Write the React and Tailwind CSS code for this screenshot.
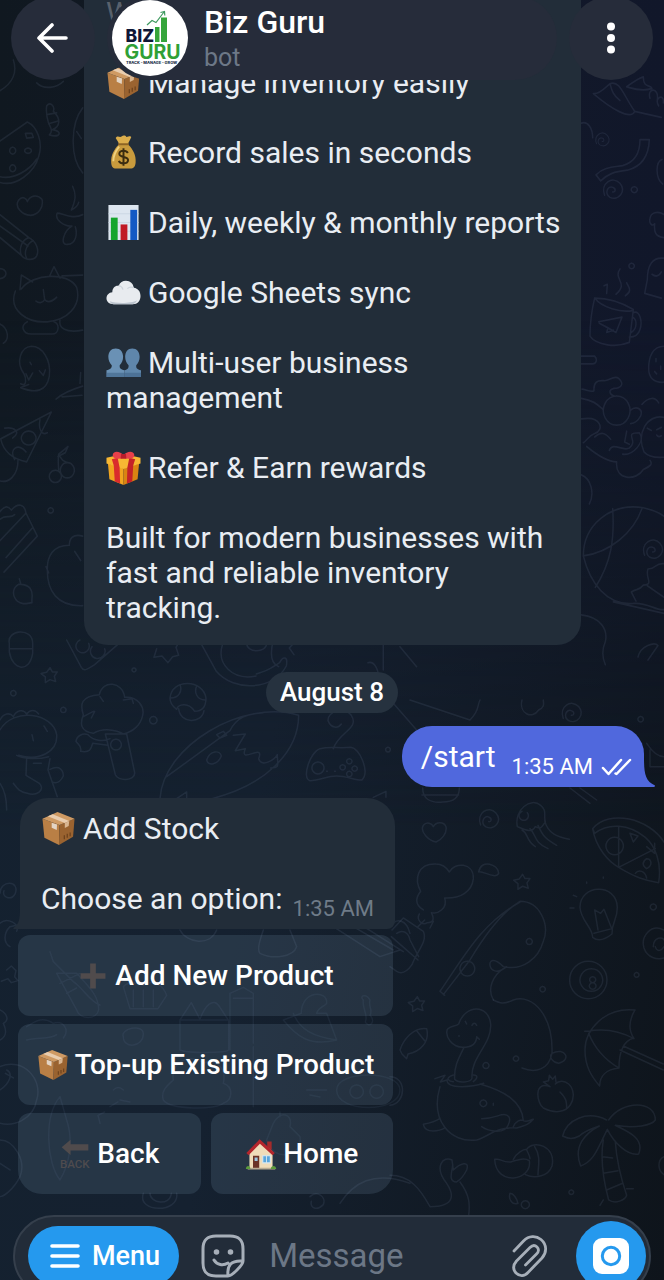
import React from "react";

function Glyph({ label, className = "h-[35px] w-[35px]", children }) {
  return (
    <svg role="img" aria-label={label} viewBox="0 0 36 36" className={`shrink-0 ${className}`}>
      {children}
    </svg>
  );
}

function Package({ className }) {
  return (
    <Glyph label="package" className={className}>
      <path d="M1.500 8 19 14.500 18.500 35 3.500 27.500Z" fill="#b97f45" />
      <path d="M19 14.500 34.500 8 33 26.500 18.500 35Z" fill="#9a6330" />
      <path d="M1.500 8 17 1 34.500 8 19 14.500Z" fill="#cf9a63" />
      <path d="M7 5.500 12 3.300 29 10.300 24.500 12.300Z" fill="#e9cdaf" />
      <path d="M24.500 12.300 29 10.300 28.500 15.500 24.500 17.500Z" fill="#d9b691" />
      <path d="M11 12 16.500 14 16.200 19.500 11 17.200Z" fill="#e3d4c4" />
      <path d="M24 25v4M27 23.500v4M30 22v4" stroke="#6d421d" strokeWidth="1.300" />
    </Glyph>
  );
}

function MoneyBag() {
  return (
    <Glyph label="money bag">
      <path d="M10 3c2-3 4 0 6-1.500 2-1.500 4-1 5 .5 2 0 4-1.500 5 0-1 3-3 5-3.500 8h-9C13 7 11 5 10 3Z" fill="#dcae4c" />
      <path d="M13 10h10c5 5 8 11 7.500 18-.3 4.500-2 6.500-5.500 6.500H10.500C7 34.500 5.500 32.500 5.300 28 5 21 8 15 13 10Z" fill="#c99b3d" />
      <path d="M13.500 12c-4 5-6 9-6 15" stroke="#efd07d" strokeWidth="2" fill="none" />
      <path d="M12.500 9.500h11" stroke="#8d6424" strokeWidth="2" />
      <path d="M22.500 18.500c-1-1.800-2.600-2.300-4.500-2.300-2.500 0-4.300 1.100-4.300 3.200 0 4.600 9 2 9 6.400 0 2.100-2 3.400-4.600 3.400-2.300 0-4.100-.8-4.900-2.700M18 13.700v18" stroke="#3b2c10" strokeWidth="2" fill="none" />
    </Glyph>
  );
}

function BarChart() {
  return (
    <Glyph label="bar chart">
      <path d="M2.500 0h31v36h-31Z" fill="#dde6f0" />
      <path d="M2.500 9h31M2.500 18h31M2.500 27h31" stroke="#c6d2e0" strokeWidth=".8" />
      <path d="M5 13h7v23H5Z" fill="#14a52c" />
      <path d="M15 20h7v16h-7Z" fill="#c01824" />
      <path d="M25 5h7v31h-7Z" fill="#1459c4" />
    </Glyph>
  );
}

function Cloud() {
  return (
    <Glyph label="cloud">
      <path d="M8 30C3 30 .5 27.500.5 24c0-3.500 2.500-6 6-6.300C6.500 13 9.500 10.500 13 11c1.500-3.500 4-5 7.500-5 4.500 0 7.500 3 8 7 4.500.5 7 4 7 8.500 0 5-3 8.500-8 8.500Z" fill="#e8ebef" />
      <path d="M4 27c6 2.500 22 2.500 28-1-1.500 2.700-3 4-5 4H8c-2 0-3.500-1-4-3Z" fill="#bcc4ce" />
      <path d="M13 11c2.500.4 4 2 4.500 4M22 14c1.500-1.500 4-2 6.500-1" stroke="#cdd4dc" strokeWidth="1.200" fill="none" />
    </Glyph>
  );
}

function People() {
  return (
    <Glyph label="two people">
      <path d="M27 3.500c4.700 0 7.600 3.500 7.600 8.700 0 3.700-1.400 6.700-3.500 8.500-.3 3 .9 4.200 4.900 5.300v7H19v-7c3.500-1 4.500-2.500 4.200-5.300-2.100-1.800-3.500-4.800-3.500-8.500 0-5.200 2.700-8.700 7.300-8.700Z" fill="#5f86ab" />
      <path d="M10 3.500c4.700 0 7.600 3.500 7.600 8.700 0 3.700-1.400 6.700-3.500 8.500-.3 3 .9 4.200 4.900 5.300v7H.5v-7c4-1.100 5.700-2.500 5.400-5.300-2.100-1.800-3.500-4.800-3.500-8.500C2.400 7 5.400 3.500 10 3.500Z" fill="#6a91b5" />
      <path d="M.5 28.500H36V33H.5Z" fill="#3f6488" opacity=".6" />
    </Glyph>
  );
}

function Gift() {
  return (
    <Glyph label="gift">
      <path d="M2 14 18 19v17L3.500 30Z" fill="#f1a51f" />
      <path d="M34 14 18 19v17l14.500-6Z" fill="#d98412" />
      <path d="M.5 8 18 4l17.500 4v6L18 19.500.5 14Z" fill="#f7b733" />
      <path d="M6 9.500 12 8l2 10 .5 16.500L9 32.300 8 16Z" fill="#da2c2c" />
      <path d="M30 9.500 24 8l-2 10-.5 16.500 5.500-2.200L28 16Z" fill="#c42227" />
      <path d="M18 8C13 10 6 9 7 4.500 8 0 15 1.500 18 5c3-3.500 10-5 11-.5C30 9 23 10 18 8Z" fill="#e8404a" />
      <path d="m15.500 4 5 0 .5 5h-6Z" fill="#b91d2b" />
    </Glyph>
  );
}

function House() {
  return (
    <Glyph label="house" className="h-8 w-8">
      <path d="M25 4h5v9h-5Z" fill="#a52b2b" />
      <path d="M5 15 17 4l14 11v19H5Z" fill="#f0dcb9" />
      <path d="M1.500 17 16.500 1.500 33.500 17l-2.500 2.500L16.800 6.500 4 19.500Z" fill="#b3262c" />
      <path d="M9 20h7v14H9Z" fill="#6b3327" />
      <path d="M10.800 22h3.400v4h-3.400Z" fill="#9fc6e0" />
      <path d="M20 20h8.500v8H20Z" fill="#5aa6dc" stroke="#d8e8f2" strokeWidth="1.200" />
      <path d="M24.200 20v8" stroke="#d8e8f2" />
      <path d="M3 34.500h31" stroke="#b9ab93" strokeWidth="2" />
      <path d="M1 35c0-4 4-5 5-1v1ZM29 35c0-4 5-5 6-1v1Z" fill="#5c9b3c" />
    </Glyph>
  );
}

function Plus() {
  return (
    <Glyph label="plus" className="h-8 w-8">
      <path d="M14.800 4h6.400v10.800H32v6.400H21.200V32h-6.400V21.200H4v-6.400h10.800Z" fill="#504b4c" />
    </Glyph>
  );
}

function BackArrow() {
  return (
    <Glyph label="back" className="h-8 w-8">
      <path d="M3 10.500 13 2v5h20v7H13v5Z" fill="#504b4c" />
      <text x="1" y="34" fontSize="13" fontWeight="500" fontFamily="Roboto, sans-serif" fill="#4e4b4e">BACK</text>
    </Glyph>
  );
}

const star = "m0-22 7 13 15 0-9 13 4 16-17-6-14 9 0-17-13-10 17-4Z";
const swirl = "M-26 16c-14-36 24-60 46-36 20 24-4 54-30 42-18-12-6-36 8-30 12 4 8 16 0 14";

function Wallpaper() {
  return (
    <svg aria-hidden="true" viewBox="0 0 664 1280" preserveAspectRatio="xMidYMid slice" className="absolute inset-0 h-full w-full">
      <g fill="none" stroke="#8ea3c8" strokeOpacity=".11" strokeWidth="4.500" strokeLinecap="round" strokeLinejoin="round">
        <g transform="translate(0 60) scale(.3333 .3827)">
          <path d="M40 0c12 30 0 60-40 80M110 60c20 18 60 14 80-4M140 120c10-12 26 0 20 14 24 20 20 40-2 48 30 4 24 22-10 14 12-10 4-20-2-30-8-22-8-34-6-46ZM144 142l26-4M148 166l24-6" />
          <path d="M0 212 82 162c30 12 48 54 34 90-12 40-66 80-116 68M76 192l20 0 4 10-20 2ZM38 228a9 9 0 1 0 .1 0M84 230a10 7 0 1 0 .1 0M38 274a9 9 0 1 0 .1 0M0 305c40 8 88-16 110-46M248 125c-36 40-40 130 0 170M244 205l-14-18" />
          <path d="M92 406c-26-2-50-22-36-40 12-12 24-4 26 4 8-16 30-20 44-6 6 22-12 40-34 42ZM0 404l86 60c24 10 32 34 24 48-10 14-36 10-46-2L0 464M0 434l84 52M86 464c-20 6-30 28-22 46M100 472c-18 6-30 30-20 46M218 330c12 22 8 38-4 62 14-6 20-12 22-20M248 404c-30 14-60-4-76-4-10 16 20 36 44 34-24 12-38 50-14 48 28-2 30-30 24-46" />
          <path d="M60 600l4-38 34 18M148 566l14-26 18 30M64 598c34-40 140-46 166-4 16 50-30 86-88 90-60 4-118-30-96-80M130 600l4 26c-6 10-18 10-26 4M134 626c10 10 24 4 36-6M82 684c-24 10-12 32 12 32h62c22 0 24-26 6-32M180 680c-4 20 16 34 68 26M186 564l62-2M0 690c24 10 30 40 10 50M0 545a18 13 0 0 1 0 26" />
          <path d="M62 846c20 10 16-16 10-26-26-30-10-70 22-72 34 0 60 36 54 78-8 40-40 46-86 30l24-8M78 820l8 16 12-18M118 812l12 12 6-14M90 790l4 6M168 886c20-16 50-26 80-34M186 880l60-4M240 845l2-28" />
          <path d="M2 990 154 920 80 1050c-46-8-70-28-78-60ZM86 970a22 18 0 1 0 .1 0M120 940c-6 26 6 42 22 34M44 1044c-20-30 14-44 34-20M14 962c30-4 50 10 24 26M54 1046c0 40-28 60-54 54M166 1072a18 16 0 1 0 .1 0M202 1052a21 20 0 1 0 .1 0M176 1070c-2-20-2-26 0-40l28-20-8 16-22 10M178 1034l10 12 12 6M152 1170a8 7 0 1 0 .1 0" />
          <path d="M0 1180c14-16 24-16 34-4 20-20 40-16 44 8l34 60L12 1338M0 1256l78-72M18 1300l78-76M0 1200c20-14 30 0 44-12M56 1370c-20 10-20 30-4 44 14 10 26 6 44 4-2-16 6-24-6-38-12-12-26-10-34-10ZM62 1368l-4-12M248 1244c-30-6-40 6-40 24-50 0-66 30-66 60-2 60 30 100 106 98M224 1284l18 24M146 1340l-8-16" />
        </g>
        <g transform="translate(560 60) scale(.3333 .3827)">
          <path d="M100 88c20 2 40-20 50-26 30-10 40 30 74 72-12 24-70-6-124-46ZM150 62c6 20 10 30 30 44M200 70c14-10 40-24 50-26 0 30 20 20 26 30-30 10-60 0-76-4M224 134l80 16M270 100c-10-28 28-30 22 4M296 120c-16-22 18-34 14-8" />
          <path d="M64 165c20-6 34 14 34 38M240 208h28c-2 50-30 72-66 80-40 4-60 10-80 28l-14-16c22-20 50-20 80-24 34-8 52-32 52-68ZM306 260c-20 6-20 50 2 64M312 404c-20-12-40-4-42 10-4 14 8 22 14 14-2 18 0 34 28 36M312 518c-36-4-50 20-50 56l-8 36 50 12M276 560c12 8 20 6 28-6" />
          <path d="M104 622c-10 36-14 70-14 100 20 24 80 30 118 16l12-86c-26-14-70-30-116-30ZM104 622c20 24 80 40 116 32M220 660c20-6 28 24 20 44-6 18-22 20-32 20M218 672c14 6 14 30-4 40M116 684l70-12-18 40-24-12-26-12M144 700l-4 12 20-6M140 610l2-24-10 4M168 612c40-30-10-40 12-66M196 616c24-14 8-24 4-34" />
          <path d="M64 774h40c10 8 4 20-6 20H64M312 748c-34 0-46 28-46 58 0 24 16 38 46 36M288 780v8M302 800v8M284 814l6 6M66 860c10 0 30 10 36 4-2-22 10-28 30-26 14 2 30-16 44-6 20 16 4 26-14 26-18 4-14 16 0 20M170 878a40 38 0 1 0 .1 0M210 916c20-14 40-4 32 14-10 16-20 20-30 20M64 884c40 6 50 18 66 30M64 938c60-10 70 30 40 38-20 6-24 20-34 24M80 1010c50 36 80 40 90 40-6 50 60 50 80 20 24-10 28-14 20-24M104 985c20-14 30-12 48 6M148 1020c10-24 40 4 60-6 30-20-20-40 30-40 20 24-20 60-50 56M200 970l-6 28 14 6M312 934c-50-10-84 42-60 90 12 12 30 16 60 14M262 962l12 6M290 966l14-6M290 980c4 6 10 4 14 2M246 900c20-20 40-20 50-4" />
          <path d="M70 1296c0-80 80-140 180-126 30 6 46 12 62 22M70 1296c20 70 70 130 150 124 40-4 70 20 92 16M158 1172c6 80-4 140-52 206M70 1296c80-10 150-60 176-124M160 1416l152 30M312 1316c-30-2-20 14-48 14-10 24 20 40-14 42-14 16-20 8-36 18l14 24M262 1374l50 30M64 1450c60 6 80 40 72 70-10 20-10 40 0 60M64 1084c30 10 40 50 24 76M234 1560c8-30 50-40 60-30l-30 38" />
        </g>
        <g transform="translate(0 640) scale(.3333)">
          <path d="M28 10c-10-40 70-50 70 0v30c-10 60-60 52-70-4ZM28 26h70M200 0l44 82c8 14 18 6 40-8l80-70M240 0a20 20 0 1 0 26 10M276 20a22 22 0 1 0 38 6M470 26l-8 26 24-4 18 20 14-18 18-4-8-24 12-20M605 14l44 80c50 60 170 60 210-16 6-30-10-30-20-10-30 20-40 24-70 34M668 12c-20 60 30 110 100 96M740 10c0 30 60 30 60 0M820 0c-10 40-10 70 16 80M890 0l-22 24 14 20M1150 0v90M1104 68c20-6 30 20 34 48M1200 20l50 60" />
          <path d="M280 280c-40-6-40-30-30-56-10-30-8-56 48-60 10-46 70-40 76 8 40-4 60 30 54 54-6 30-30 50-58 56-20-12-60-20-90-2ZM300 170l10 14M250 230l30-16M274 234l10-20M370 180l26-4 4 14M316 282l30 122c6 20 60 20 58-6l-24-116ZM348 298a16 16 0 1 0 .1 0M330 296c-20 10-50 6-66-12-16-6-34 4-36 20 6 10 18 12 14 30 30 6 32-10 36-24l46 6" />
          <path d="M510 174c6-60 100-56 108 0 0 30-14 40-34 40-20-30-50-20-54-6-14-10-20-20-20-34ZM512 174c24 0 36-20 28-40M616 180c-26 0-34-24-26-42M536 206c4 46 70 46 76 6M480 476c10-160 250-300 416-250 0 110-100 210-260 250M500 410 690 272c20-40 50-50 100-54M620 360c10-30 40-30 44-12-10 26-40 32-44 12ZM700 286l36-4-30 50 30-6c-20 50 60-20 40 30 10 30 50 0 56-12 0 30 10 40-20 40M650 284l20-10 10 12-20 8ZM530 476l30-20v18" />
          <path d="M1000 326c16-50 80-60 54-100-20-26-70-14-70 16 10 24 30 24 40 10M960 326c-30 10-56 90-30 96 30 0 50-14 80-14s60 14 76 12c24-24-6-96-34-98-40 4-60-4-92 4ZM954 366a18 18 0 1 0 .1 0M1048 356a8 8 0 1 0 .1 0M1064 378a8 8 0 1 0 .1 0M1028 374a8 8 0 1 0 .1 0M1048 394a8 8 0 1 0 .1 0M980 394h2M1004 394h2M1180 190l70 80M1120 472l38-18v18M0 270c40-70 160-50 170 14 4 50-50 80-114 62M50 346c20 10 60 14 96 4M0 240c10-20 30-24 40-10 10-20 30-24 40-8 10-14 26-14 36 0M96 284l4 18M132 258l10 16M80 352l-2 54 40 24c20 20-10 40-36 30-24-4-30-14-42-30M150 356l-6 34 28 80M150 388c30-14 40 4 40 20-8 16-20 24-34 18M100 370h24M0 430c14 20 20 50 20 80" />
        </g>
        <g transform="translate(0 780) scale(.3333)">
          <path d="M30 500c-20-12-20-40 0-60l26-6M0 430c20-20 60 0 50 24M20 570l14-12 14 14-4 18 10 12-20 6-10-12-20 8M0 690c20 10 30 30 10 40 10 20 10 40-10 50M0 860c70-30 130 40 110 100-10 60-70 80-110 70M0 1080c40 0 80 60 60 110-20 40-50 60-60 60M16 880l24 14M0 930c30-20 40-50 20-60M0 1150l30 20M0 340c0-40 60-40 46 0-12 24-42 12-34-8" />
          <path strokeOpacity=".08" d="M150 515l10 30 60 60c30 20 50 60 80 70M170 580l60 110c10 30 60 30 66 0 0-40-20-60-66-110ZM180 610l60-30M200 640l30-16M370 620c20-20 40-10 60-4 30-20 60 0 70 30l-26 40H390ZM400 630v50M430 630v50M460 630v50M540 720l34-52 26 50c14-40 40-70 60-36l26 40M540 720v90c20 10 140 10 146 0v-90ZM690 640v170M690 640l40-18 30 18v150M700 655h60M850 720l54-20c0-70 80-70 76-30-6 10-24 10-30 30l30 0 30 80c-80 20-120-10-160-60ZM880 700c20 50 60 70 130 80M1090 660c-14-14 10-20 20 0-6 20 10 30 0 46 20 20-4 40-14 20 10-20-10-40-6-66ZM370 770c-10-24 60-40 60-8 0 40-60 46-60 8ZM80 740c30-20 50-30 80-10 30-10 50 20 30 44M80 780c30-10 70 0 90-16" />
          <path strokeOpacity=".08" d="M490 960c-10-30 20-50 30-60-10-60 60-80 90-50 40-20 70 20 60 60 30 10 30 50 0 60-20 20-160 20-180-10ZM760 800v180M1010 930c0-60 190-60 190 0 0 70-190 70-190 0ZM1070 915a20 20 0 1 0 .1 0M1130 915a20 20 0 1 0 .1 0M920 930h60M930 945l30 6M300 1030l-6-24 20-10M330 980l24-14M340 930c10-10 20-10 30 0M360 960l30 6M180 950c-50 60-40 200 0 250M180 950l20 70c20 60 10 130-20 180M820 1030c20-40 60-30 50 10l30 30c10 60-80 80-100 10ZM840 1010v-14" />
          <path d="M430 1240c-20 60 110 60 100 0M450 1240c0 30 60 40 64 0M930 1250c20-20 50 0 40 24-20 20-40 10-36-10M1020 1270c40-60 100-100 210-60M540 450c20 40 90 50 110 0M790 450c-10 30-20 60-10 70 40 20 100 10 110-20l-20-50M1000 440l140 90 60-20M1060 440l120 70M1170 440c20-30 50-20 60 20M1100 445l110 70" />
        </g>
        <g transform="translate(390 700) scale(.3333)">
          <path d="M60 0 240 60c30-30 20-40 30-60M396 0c-10 40 30 60 50 30 20-10 14-20 14-30M98 264c0 30 20 46 60 42 40 0 50-20 50-42M96 285h110M540 264l60 46M570 264l50 36M138 426c-20-4-50-30-38-50 10-12 26-6 30 4 8-16 32-16 38 0 4 20-14 40-30 46ZM382 380c-10-50 40-90 70-64 20 16 8 30 14 50-10 12-10 24-30 14-10 20-30 10-54 0ZM396 334a14 14 0 1 0 16 4M396 390c20 10 10 30 40 50M420 386c20 20 10 40 54 60M444 376c14 30 20 40 56 60M464 362c10 40 40 50 74 56" />
          <path d="M608 386c50-60 170-30 214 40M608 386c10 60 50 100 78 116 50 30 80 40 120 46 10-60-10-110-40-136-50-40-110-44-152-12ZM686 382v120l110-56M674 412a26 26 0 1 0 .1 0M720 400l24 8-14 18ZM770 476c14 0 20 20 0 30-14-10-14-20 0-30ZM736 520c10-14 30-6 34 14M770 440l24 20 0-30M770 130c20 30 40 40 52 40M780 150v50h42" />
          <path d="M100 630c-30-20-20-40-8-56-20-36-10-84 46-82 20 0 30 8 40 24 14-30 74-30 72 20-4 40-40 60-86 58 10 30-20 50-40 44 10 20 6 30-12 30-16 10-34-8-24-26M266 516c6-40 60-24 60 4-10 20-50-10-60-4ZM6 690l34-36 60 40c14 30-20 60-34 100-14 20-30 30-46 20L0 800M20 700c20-14 36 0 40 20L86 770M84 680l20-20M120 684l10-20M4 710l80 70" />
          <path d="M160 884 240 780c30-50 90-140 150-176 60 0 90 70 70 120-14 50-60 90-120 76-60-60-50 50 10 0M150 874c70-100 120-200 240-268M150 874l14 12M232 784a22 22 0 1 0 .1 0M340 806c-30 20-50 60-30 94M608 712c0-30-36-50-38-90 0-70 110-74 112 0 0 40-16 40-16 80-20 16-40 24-58 10ZM624 690l-10-60 18 10 10-12 24 60M612 700l54-14M595 840m-56 0a56 56 0 1 1 112 0a56 56 0 1 1-112 0M604 806a34 34 0 1 0 .1 0M608 830a9 9 0 1 0 .1 0M608 848a10 10 0 1 0 .1 0M550 586l10 4M540 624h12M590 550v-4M640 535v-4M822 690c-40-20-70 20-60 54 10 30 40 36 60 30M790 740c0-30 30-30 32-20M796 740c6 20 20 10 26 0" />
        </g>
        <g transform="translate(390 960) scale(.3333)">
          <path d="M310 120c20 10 30 14 60 0 60-20 120 50 116 160 40-20 60 20 20 30-20-4-30-20-20-30-10 50-50 60-90 44M378 288a8 8 0 1 0 .1 0M30 270c10-30 40-70 80-64 10 40-20 70-56 76l-4 14-14-14ZM80 212l24 30" />
          <path d="M218 262c-30 0-54-30-46-54 10-12 24-8 34-16 20-60 90-60 96 0 4 60-60 100-56 160M218 262c20 0 40-6 42-30M260 230l8 8M222 262c-20 40-30 60-28 96 10 12 50 10 52-4M226 184l4 8M246 196c4-8 10-8 14 0M206 228h2M135 356l30-10-14 20 20-6c0 30 80 20 110 10M190 345c-30 10-10 20 0 20M250 345c14 0 14 10 0 20M150 380c-30 100 30 170 110 160 40-10 50-40 120-36 30-8 40-14 50-26-10 2-20 10-30 4-4-60-60-90-130-110M150 475c-14 10-30 14-50 18 6 30 50 20 66 10M275 476c30 0 40-6 60-12 20-4 30 10 20 30-10 30-60 20-80 6M370 500c10-20 20-20 30-20M280 420a10 10 0 1 0 .1 0M310 430v6" />
          <path d="M735 150c-90-10-150 60-150 120 0 50 20 80 44 108 0-30 20-50 58-54 0-40 10-80 44-90-20-30-10-60 4-84ZM592 214c50-10 100 0 140 22M596 220c20 50 50 80 90 104M584 214h14M690 270l130 60M700 258l120 54M480 380l-20-14 16-4 2-16 10 12 8-10 2 18M480 380c-50-20-40 50-20 64 80 40 110-40 76-72-14-12-30-10-40 0M510 396c20 20 20 30 20 50" />
          <path d="M650 480c-60-30-120 0-132 48 20 10 30 10 50 0 10-10 30-20 60-30-40 20-80 60-56 120 40-14 50-50 80-110 20 40 60 80 94 74 20-50-40-70-70-86 60 10 110 0 120-16 0-60-100-60-140 0M640 540c-10 60 0 120 16 180 20 14 50 0 54-14-20-60-30-100-34-160M638 590l30 4M640 640l44-8M650 690l48-20M710 686h20M640 720l-10 16M318 598c10-4 20 10 44 8 20-6 40-14 56-4 10 60-100 80-104-4ZM370 598c10-20 30-30 40-30 20-30 90-10 76 50-10 30-50 40-80 26M410 570c10 20 10 20 10 26M434 560c20 30 10 60 10 84M0 646c60 0 90 40 120 94 80 0 70-40 50-70-40-50-10-84 16-70l4 30c20-20 50-30 40 0-10 20-20 30-30 36-30 0-10-40-12-54M210 666c30 40 30 70 26 100M360 700c10 0 20 14 24 30-16 6-30-10-24-30ZM406 722a12 12 0 1 0 .1 0M822 590c-20 10-20 40 0 54M0 350c50 0 50 80 0 86" />
        </g>
        <g transform="translate(0 0) scale(.3333)">
          <path transform="translate(1840 570)" d={swirl} />
          <path transform="translate(1808 420) scale(.7)" d={swirl} />
          <path transform="translate(1960 1650)" d={swirl} />
          <path transform="translate(1716 2140)" d={swirl} />
          <path transform="translate(1468 2459)" d={swirl} />
          <path transform="translate(150 2025)" d={star} />
          <path transform="translate(1568 2645)" d={star} />
          <path transform="translate(1252 3012)" d={star} />
          <path d="M40 2072a8 8 0 1 0 .1 0M190 2122a8 8 0 1 0 .1 0M460 2150a11 11 0 1 0 .1 0M402 2004a6 6 0 1 0 .1 0M1164 2242a7 7 0 1 0 .1 0M1922 2150a8 8 0 1 0 .1 0M1960 2712a9 9 0 1 0 .1 0M1588 2816a9 9 0 1 0 .1 0M1628 2960a8 8 0 1 0 .1 0M1910 2918a7 7 0 1 0 .1 0M1714 3570a7 7 0 1 0 .1 0M1458 3188a9 9 0 1 0 .1 0M1903 560a9 9 0 1 0 .1 0M1895 790a8 8 0 1 0 .1 0" />
        </g>
      </g>
    </svg>
  );
}

function Logo() {
  return (
    <svg role="img" aria-label="Biz Guru logo" viewBox="0 0 76 76" className="h-[76px] w-[76px] shrink-0 rounded-full bg-white">
      <path d="M43 27h4.500v15H43ZM49 17.500h6V42h-6Z" fill="#35a53b" />
      <path d="m35 25 5-4.500 4 2 8-10.500m-3.500.500 4-1 .300 4" fill="none" stroke="#3f9a60" strokeWidth="1.200" />
      <text x="13.500" y="42" fontSize="17.500" fontWeight="800" fontFamily="Inter, sans-serif" fill="#0f1736">BIZ</text>
      <text x="12.500" y="58.500" fontSize="19.500" fontWeight="700" fontFamily="Inter, sans-serif" fill="#2fa036">GURU</text>
      <text x="14" y="63.500" fontSize="3.900" fontWeight="800" fontFamily="Inter, sans-serif" fill="#22314a">TRACK - MANAGE - GROW</text>
    </svg>
  );
}

function Header() {
  return (
    <header className="absolute inset-x-0 top-0 z-10 -mt-1 flex items-start gap-3 px-[11px]">
      <button type="button" aria-label="Go back" className="flex h-[84px] w-[84px] shrink-0 items-center justify-center rounded-full bg-[#262c3a]">
        <svg viewBox="0 0 32 32" className="h-8 w-8" fill="none" stroke="white" strokeWidth="3.600" strokeLinecap="round" strokeLinejoin="round">
          <path d="M29 16H2M15 3 2 16l13 13" />
        </svg>
      </button>
      <div className="flex h-[84px] min-w-0 flex-1 items-center gap-4 rounded-full bg-[#262c3a] pl-[5px]">
        <Logo />
        <div className="min-w-0 pt-1">
          <h1 className="text-[32px] leading-9 font-medium text-white">Biz Guru</h1>
          <p className="text-[25px] leading-9 text-[#6d7887]">bot</p>
        </div>
      </div>
      <button type="button" aria-label="More options" className="flex h-[84px] w-[84px] shrink-0 items-center justify-center rounded-full bg-[#262c3a]">
        <svg viewBox="0 0 8 32" className="h-8 w-2" fill="white">
          <circle cx="4" cy="4.500" r="4" />
          <circle cx="4" cy="16" r="4" />
          <circle cx="4" cy="27.500" r="4" />
        </svg>
      </button>
    </header>
  );
}

const features = [
  { icon: Package, text: "Manage inventory easily" },
  { icon: MoneyBag, text: "Record sales in seconds" },
  { icon: BarChart, text: "Daily, weekly & monthly reports" },
  { icon: Cloud, text: "Google Sheets sync" },
  { icon: People, text: "Multi-user business management" },
  { icon: Gift, text: "Refer & Earn rewards" },
];

function IntroMessage() {
  return (
    <article className="ml-[84px] flex w-[497px] shrink-0 flex-col gap-[35px] rounded-3xl bg-[#222d39] pt-5 pr-4 pb-5 pl-[22px] text-[30px] leading-[35px] text-[#e9edf3]">
      <p className="text-[#59616c]">W</p>
      {features.map(({ icon: Icon, text }) => (
        <p key={text}>
          <span className="mr-[7px] inline-block h-[35px] w-[35px] align-top">
            <Icon />
          </span>
          {text}
        </p>
      ))}
      <p>Built for modern businesses with fast and reliable inventory tracking.</p>
    </article>
  );
}

function SentMessage() {
  return (
    <article className="relative mt-[13px] mr-5 flex h-[61px] shrink-0 items-center gap-4 self-end rounded-l-[30px] rounded-tr-[28px] bg-[#5068dd] pr-3 pl-[19px] text-white">
      <a href="#start" className="text-[30px] leading-[35px]">/start</a>
      <div className="flex items-center gap-2 pt-5">
        <time className="text-[22px] leading-7">1:35 AM</time>
        <svg role="img" aria-label="Read" viewBox="0 0 31 18" className="h-[18px] w-[31px]" fill="none" stroke="white" strokeWidth="2.500" strokeLinecap="round" strokeLinejoin="round">
          <path d="m2 10 5.500 6L20 2M14.500 15.500l1 .5L29 2" />
        </svg>
      </div>
      <svg aria-hidden="true" viewBox="0 0 12 30" className="absolute right-[-11px] bottom-0 h-[30px] w-3">
        <path d="M0 0h1c0 16 1 24 11 28.500 0 1-.5 1.500-2 1.500H0Z" fill="#5068dd" />
      </svg>
    </article>
  );
}

function KeyboardButton({ icon: Icon, children }) {
  return (
    <button type="button" className="flex h-[81px] flex-1 items-center justify-center gap-[6px] rounded-xl bg-[#8fb0cc]/15 text-[28px] leading-8 font-medium whitespace-nowrap text-white">
      <Icon className="h-8 w-8" />
      {children}
    </button>
  );
}

function OptionMessage() {
  return (
    <article className="mt-[11px] flex w-[375px] shrink-0 flex-col">
      <div className="relative ml-5 w-[375px] rounded-t-[28px] rounded-br-lg bg-[#222d39] px-[21px] py-[13px] text-[30px] leading-[35px] text-[#e9edf3]">
        <p className="flex items-center gap-[7px]">
          <Package className="h-[35px] w-[35px]" />
          Add Stock
        </p>
        <div className="mt-[35px] flex items-end justify-between">
          <p>Choose an option:</p>
          <time className="-mb-1 text-[22px] leading-[22px] text-[#6f7b88]">1:35 AM</time>
        </div>
        <svg aria-hidden="true" viewBox="0 0 8 20" className="absolute bottom-0 left-[-7px] h-5 w-2">
          <path d="M8 0v20H1c-1 0-1-1 0-1.500C6 15 7 10 7 0Z" fill="#222d39" />
        </svg>
      </div>
      <div className="mt-[6px] ml-[18px] flex w-[375px] flex-col gap-2">
        <div className="flex"><KeyboardButton icon={Plus}>Add New Product</KeyboardButton></div>
        <div className="flex"><KeyboardButton icon={Package}>Top-up Existing Product</KeyboardButton></div>
        <div className="flex gap-[10px] overflow-hidden rounded-b-3xl">
          <KeyboardButton icon={BackArrow}>Back</KeyboardButton>
          <KeyboardButton icon={House}>Home</KeyboardButton>
        </div>
      </div>
    </article>
  );
}

function Composer() {
  return (
    <footer className="relative h-[65px] shrink-0 px-[13px]">
      <form className="flex h-[82px] items-center rounded-full border-2 border-[#353f4c] bg-[#222c39] pr-[3px] pl-[13px]" onSubmit={(e) => e.preventDefault()}>
        <button type="button" className="flex h-[60px] shrink-0 items-center gap-3 rounded-full bg-[#2599ee] pr-[19px] pl-[22px] text-[27px] font-medium text-white">
          <svg aria-hidden="true" viewBox="0 0 30 24" className="h-6 w-[30px]" stroke="white" strokeWidth="3.600" strokeLinecap="round">
            <path d="M2 2h26M2 12h26M2 22h26" />
          </svg>
          Menu
        </button>
        <button type="button" aria-label="Stickers" className="ml-[22px] shrink-0">
          <svg viewBox="0 0 44 44" className="h-11 w-11" fill="none" stroke="#a7afb9" strokeWidth="3" strokeLinecap="round" strokeLinejoin="round">
            <path d="M42 27V15C42 6 38 2 29 2H15C6 2 2 6 2 15v14c0 9 4 13 13 13h12c4 0 15-11 15-15ZM27 42c-1-11 3-16 15-15M13 26c3 5 9 6 14 3" />
            <circle cx="15.500" cy="18" r="1.300" fill="#a7afb9" />
            <circle cx="29.500" cy="18" r="1.300" fill="#a7afb9" />
          </svg>
        </button>
        <input aria-label="Message" placeholder="Message" className="ml-6 min-w-0 flex-1 bg-transparent text-[33px] leading-10 text-white outline-none placeholder:text-[#6c7786]" />
        <button type="button" aria-label="Attach file" className="mr-7 shrink-0">
          <svg viewBox="0 0 36 42" className="h-[42px] w-9" fill="none" stroke="#a7afb9" strokeWidth="2.800" strokeLinecap="round" strokeLinejoin="round">
            <path d="M2 16 11.500 6C17 .5 24 .5 29 4.500c6 5 6 13 1 18.500L16 37.500c-3.500 4-8.500 4-12 .500-3-3.500-3-8 .5-12L18 12.500c2.500-2.500 5-2.500 7-.5s2 4.500-.5 7L13.500 30" />
          </svg>
        </button>
        <button type="button" aria-label="Record video message" className="flex h-[70px] w-[70px] shrink-0 items-center justify-center rounded-full bg-[#2599ee]">
          <svg viewBox="0 0 36 36" className="h-9 w-9">
            <rect width="36" height="36" rx="9" fill="white" />
            <circle cx="18" cy="18" r="8.700" fill="none" stroke="#2599ee" strokeWidth="3" />
          </svg>
        </button>
      </form>
    </footer>
  );
}

export default function App() {
  return (
    <main className="relative flex h-screen flex-col overflow-hidden bg-[linear-gradient(90deg,#101820_0%,#131a29_55%,#11172a_100%)] font-['Roboto',sans-serif]">
      <div className="absolute inset-0 bg-[linear-gradient(100deg,#14212f_0%,#152130_45%,#0e141b_100%)] mask-[linear-gradient(180deg,transparent_25%,black_65%)]" />
      <Wallpaper />
      <Header />
      <section aria-label="Conversation" className="relative flex min-h-0 flex-1 flex-col justify-end overflow-hidden pb-[21px]">
        <IntroMessage />
        <time className="mt-[27px] shrink-0 self-center rounded-full bg-[#26323f] px-[14px] text-[26px] leading-[41px] font-medium text-white">August 8</time>
        <SentMessage />
        <OptionMessage />
      </section>
      <Composer />
    </main>
  );
}
